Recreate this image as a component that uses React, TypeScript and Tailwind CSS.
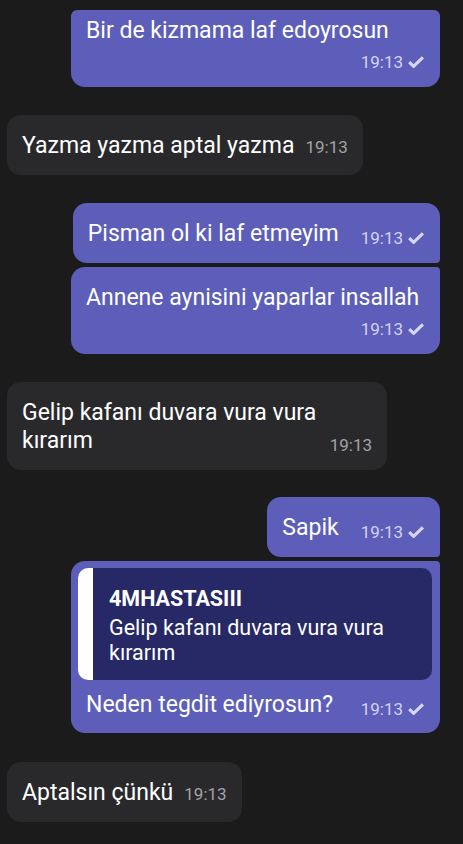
import React from 'react';

function Check() {
  return (
    <svg className="ml-[5px] w-[16px] h-[12px]" viewBox="0 0 16 12" fill="none">
      <path d="M1.2 6.2 L5.6 10.3 L14.9 1.3" stroke="#d6d7f4" strokeWidth={3.2} strokeLinejoin="miter" />
    </svg>
  );
}

function OutTime() {
  return (
    <span className="flex items-center shrink-0">
      <span className="text-[17px] leading-[20px] text-[#d2d3f2]">19:13</span>
      <Check />
    </span>
  );
}

function InTime() {
  return <span className="shrink-0 text-[17px] leading-[20px] text-[#a2a2a5]">19:13</span>;
}

export default function App() {
  return (
    <div
      className="min-h-[844px] w-full bg-[#1b1b1b] flex flex-col pt-[10px] text-white overflow-hidden"
      style={{ fontFamily: 'Roboto, "Noto Sans", sans-serif' }}
    >
      {/* out: wrapped time */}
      <div className="self-end mr-[23px] w-[369px] bg-[#5c5eb9] rounded-t-[6px] rounded-b-[14px] pl-[15px] pr-[16px] pt-[7px] pb-[15px]">
        <p className="text-[23px] leading-[28px]">Bir de kizmama laf edoyrosun</p>
        <div className="mt-[7px] flex justify-end">
          <OutTime />
        </div>
      </div>

      <div className="self-start ml-[7px] mt-[28px] bg-[#29292c] rounded-[14px] pl-[15px] pr-[15px] pt-[17px] pb-[15px] flex items-end">
        <span className="text-[23px] leading-[28px]">Yazma yazma aptal yazma</span>
        <span className="ml-[11px]"><InTime /></span>
      </div>

      <div className="self-end mr-[23px] mt-[28px] bg-[#5c5eb9] rounded-[14px] rounded-br-[4px] pl-[15px] pr-[16px] pt-[17px] pb-[15px] flex items-end">
        <span className="text-[23px] leading-[28px]">Pisman ol ki laf etmeyim</span>
        <span className="ml-[22px]"><OutTime /></span>
      </div>

      <div className="self-end mr-[23px] mt-[4px] w-[369px] bg-[#5c5eb9] rounded-[14px] rounded-tr-[4px] pl-[15px] pr-[16px] pt-[17px] pb-[15px]">
        <p className="text-[23px] leading-[28px]">Annene aynisini yaparlar insallah</p>
        <div className="mt-[7px] flex justify-end">
          <OutTime />
        </div>
      </div>

      <div className="self-start ml-[7px] mt-[28px] w-[380px] bg-[#29292c] rounded-[14px] pl-[15px] pr-[15px] pt-[17px] pb-[15px] flex items-end justify-between">
        <span className="text-[23px] leading-[28px]">
          Gelip kafanı duvara vura vura
          <br />
          kırarım
        </span>
        <InTime />
      </div>

      <div className="self-end mr-[23px] mt-[27px] bg-[#5c5eb9] rounded-[14px] rounded-br-[4px] pl-[15px] pr-[16px] pt-[17px] pb-[15px] flex items-end">
        <span className="text-[23px] leading-[28px]">Sapik</span>
        <span className="ml-[22px]"><OutTime /></span>
      </div>

      {/* reply */}
      <div className="self-end mr-[23px] mt-[4px] w-[369px] bg-[#5c5eb9] rounded-[14px] rounded-tr-[4px] pt-[7px] pl-[7px] pr-[8px] pb-[14px]">
        <div className="bg-[#262965] border-l-[15px] border-white rounded-[10px] pl-[16px] pr-[12px] pt-[18px] pb-[15px]">
          <p className="text-[21.5px] leading-[25px] font-bold">4MHASTASIII</p>
          <p className="mt-[4px] text-[21.5px] leading-[25px]">
            Gelip kafanı duvara vura vura
            <br />
            kırarım
          </p>
        </div>
        <div className="mt-[11px] pl-[8px] pr-[8px] flex items-end justify-between">
          <span className="text-[23px] leading-[28px]">Neden tegdit ediyrosun?</span>
          <OutTime />
        </div>
      </div>

      <div className="self-start ml-[7px] mt-[29px] bg-[#29292c] rounded-[14px] pl-[15px] pr-[15px] pt-[17px] pb-[15px] flex items-end">
        <span className="text-[23px] leading-[28px]">Aptalsın çünkü</span>
        <span className="ml-[11px]"><InTime /></span>
      </div>
    </div>
  );
}
